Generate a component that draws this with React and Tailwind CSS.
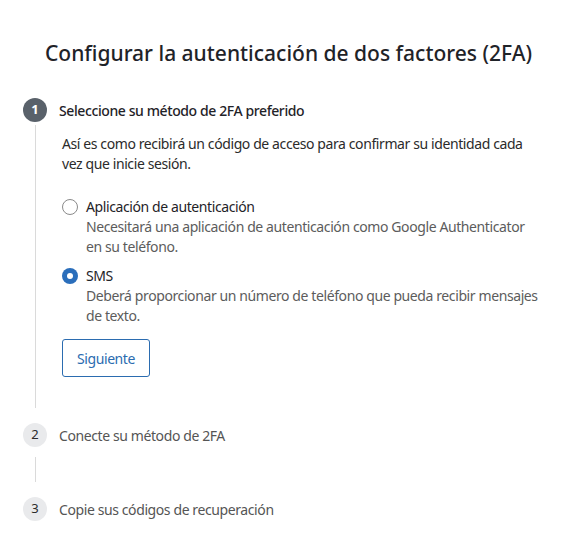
export default function App() {
  const font = { fontFamily: '"Noto Sans", "Open Sans", sans-serif' };
  return (
    <div className="w-[587px] h-[560px] bg-white text-[#1e1e1e]" style={font}>
      <div className="pt-[38px] pr-[10px] flex justify-center">
        <h1 className="text-[21px] leading-[30px] font-medium text-[#1f2328]">
          Configurar la autenticación de dos factores (2FA)
        </h1>
      </div>
      <div className="pl-[23px] pr-[44px] pt-[30px] tracking-[-0.4px]">
        {/* Step 1 */}
        <div className="flex items-center gap-[12px] h-[24px]">
          <div className="w-[24px] h-[24px] rounded-full bg-[#59616a] text-white text-[13px] font-bold flex items-center justify-center tracking-normal">1</div>
          <div className="text-[14px] font-medium text-[#1f2328]">Seleccione su método de 2FA preferido</div>
        </div>
        <div className="flex">
          <div className="w-[24px] flex justify-center pt-[3px]">
            <div className="w-[1px] bg-[#dadada] h-full" />
          </div>
          <div className="pl-[15px] pt-[12px] pb-[31px] flex-1">
            <p className="text-[14px] leading-[20px] text-[#2b2b2b]">
              Así es como recibirá un código de acceso para confirmar su identidad cada vez que inicie sesión.
            </p>
            <div className="mt-[23px] flex gap-[8px]">
              <div className="pt-[2px]">
                <div className="w-[16px] h-[16px] rounded-full border border-[#8a8a8a] bg-white" />
              </div>
              <div>
                <div className="text-[14px] leading-[20px] text-[#1f2328]">Aplicación de autenticación</div>
                <div className="text-[14px] leading-[20px] text-[#5c5c5c]">
                  Necesitará una aplicación de autenticación como Google Authenticator en su teléfono.
                </div>
              </div>
            </div>
            <div className="mt-[9px] flex gap-[8px]">
              <div className="pt-[2px]">
                <div className="w-[16px] h-[16px] rounded-full bg-[#2a6ebb] flex items-center justify-center">
                  <div className="w-[6px] h-[6px] rounded-full bg-white" />
                </div>
              </div>
              <div>
                <div className="text-[14px] leading-[20px] text-[#1f2328]">SMS</div>
                <div className="text-[14px] leading-[20px] text-[#5c5c5c]">
                  Deberá proporcionar un número de teléfono que pueda recibir mensajes de texto.
                </div>
              </div>
            </div>
            <button className="mt-[13px] h-[38px] w-[88px] rounded-[3px] border border-[#2b6cb0] text-[#2b6cb0] text-[14px] bg-white">
              Siguiente
            </button>
          </div>
        </div>
        {/* Step 2 */}
        <div className="mt-[15px] flex items-center gap-[12px] h-[24px]">
          <div className="w-[24px] h-[24px] rounded-full bg-[#e9eaec] text-[#2b2b2b] text-[13px] flex items-center justify-center tracking-normal">2</div>
          <div className="text-[14px] text-[#555]">Conecte su método de 2FA</div>
        </div>
        <div className="flex">
          <div className="w-[24px] flex justify-center pt-[10px] pb-[15px]">
            <div className="w-[1px] bg-[#dadada] h-[25px]" />
          </div>
        </div>
        {/* Step 3 */}
        <div className="flex items-center gap-[12px] h-[24px]">
          <div className="w-[24px] h-[24px] rounded-full bg-[#e9eaec] text-[#2b2b2b] text-[13px] flex items-center justify-center tracking-normal">3</div>
          <div className="text-[14px] text-[#555]">Copie sus códigos de recuperación</div>
        </div>
      </div>
    </div>
  );
}
